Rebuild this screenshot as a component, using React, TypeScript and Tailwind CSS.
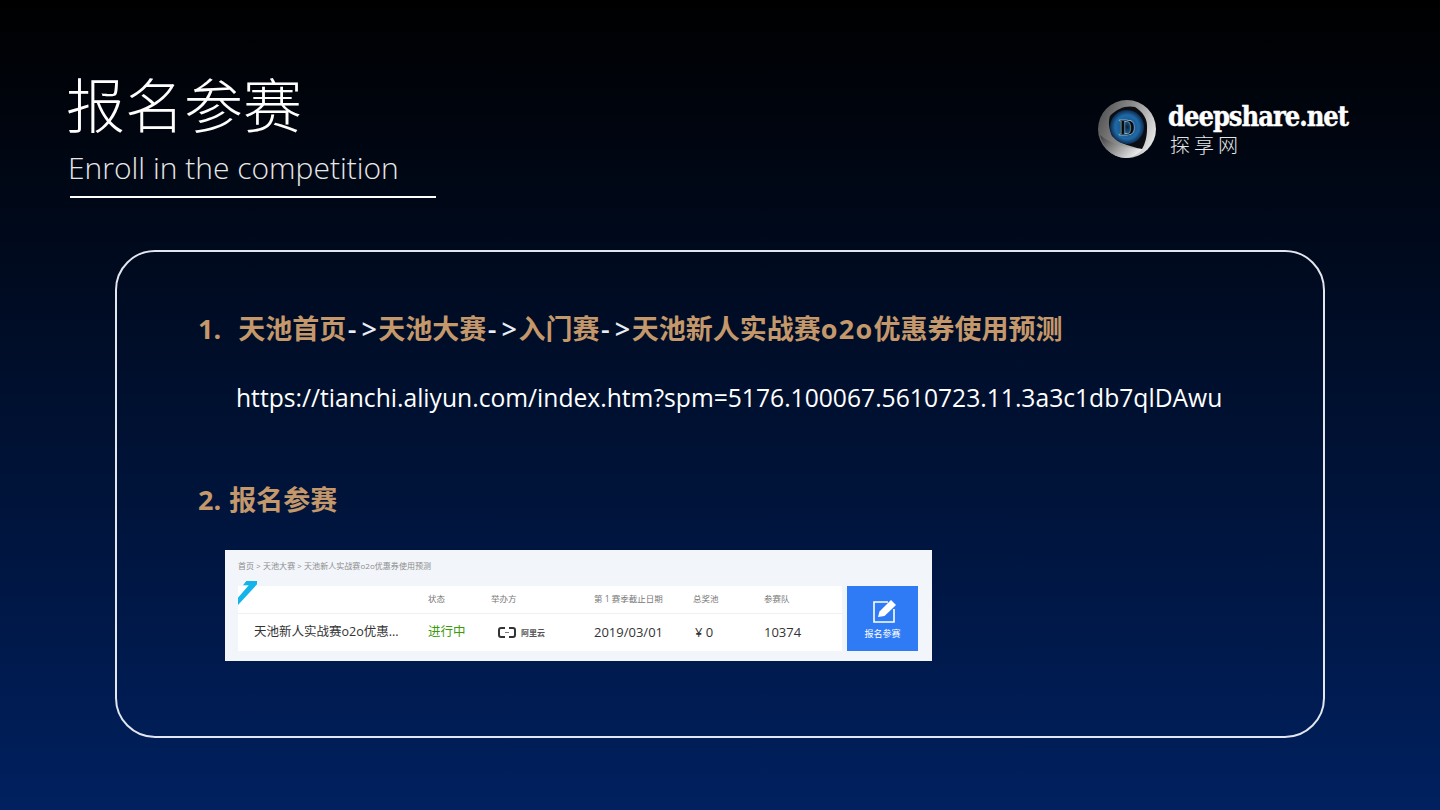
const cjk = "font-['Open_Sans','Noto_Sans_CJK_SC',sans-serif]";

const Logo = () => (
  <svg width="60" height="60" viewBox="0 0 60 60">
    <defs>
      <radialGradient id="eye" cx="50%" cy="50%" r="50%">
        <stop offset="0%" stopColor="#0e2238" />
        <stop offset="35%" stopColor="#175a92" />
        <stop offset="70%" stopColor="#2069a6" />
        <stop offset="100%" stopColor="#0d2c50" />
      </radialGradient>
      <linearGradient id="ring" x1="0" y1="0.2" x2="1" y2="0.6">
        <stop offset="0%" stopColor="#4f4f4f" />
        <stop offset="50%" stopColor="#8f8f8f" />
        <stop offset="100%" stopColor="#e6e6e6" />
      </linearGradient>
      <linearGradient id="wedge" x1="0" y1="0" x2="1" y2="0.5">
        <stop offset="0%" stopColor="#3a3a3a" />
        <stop offset="100%" stopColor="#e8e8e8" />
      </linearGradient>
    </defs>
    <circle cx="30" cy="30" r="29" fill="url(#ring)" />
    <path d="M13 17 C20 9 30 6 38 8 C46 13 51 20 50 30 C50 38 48 45 45 50 C34 48 22 44 15 37 C12 30 11 23 13 17z" fill="#0a0d14" />
    <circle cx="30" cy="28" r="17" fill="url(#eye)" />
    <path d="M3 36 C12 44 30 50 46 50 C40 56 34 59 28 59 C14 58 6 48 3 36z" fill="url(#wedge)" />
    <text x="30" y="36" textAnchor="middle" fontFamily="'Liberation Serif', serif" fontWeight="700" fontSize="23" fill="#05080f" stroke="#dbeaf6" strokeWidth="0.4">D</text>
  </svg>
);

const Pencil = () => (
  <svg className="ml-[5px]" width="24" height="24" viewBox="0 0 24 24" fill="none">
    <path d="M15 3H1v20h20V10" stroke="#fff" strokeWidth="1.6" />
    <path d="M5 18l1.5-5.5L18 1l5 5L11.5 17z" fill="#fff" />
  </svg>
);

const Arrow = () => (
  <span className="mx-[1.5px] font-semibold text-[#e8ecf4]">
    <span className="tracking-[5px]">-</span>&gt;
  </span>
);

const columns = "grid grid-cols-[190px_63px_103px_99px_71px_78px]";

export default function App() {
  return (
    <div className={`${cjk} h-[810px] w-[1440px] overflow-hidden bg-linear-to-b/srgb from-black to-[#00205f] text-white`}>
      <header className="flex justify-between pl-[68px] pr-[92px] pt-[68px]">
        <div className="w-[368px]">
          <h1 className="-ml-[2px] text-[59px] leading-[74px] font-light">报名参赛</h1>
          <p className="mt-[4px] text-[30px] leading-[44px] font-light text-[#e8e8e8]">Enroll in the competition</p>
          <div className="mt-[6px] ml-[2px] h-[2px] w-[366px] bg-white" />
        </div>
        <div className="mt-[31px] flex h-[60px] items-center gap-[11px]">
          <Logo />
          <div className="w-[180px] pt-[3px]">
            <div className="font-['DejaVu_Serif_Condensed','DejaVu_Serif',serif] text-[27px] leading-[30px] font-bold tracking-[-1px] whitespace-nowrap [-webkit-text-stroke:0.4px_white]">deepshare.net</div>
            <div className="mt-[1px] ml-[2px] text-[20px] leading-[26px] font-light tracking-[4px] text-[#e6e6e6]">探享网</div>
          </div>
        </div>
      </header>

      <section className="mx-[115px] mt-[52px] h-[488px] rounded-[40px] border-2 border-[#e2e6ee] pt-[57px] pl-[81px]">
        <h2 className="text-[27px] leading-[40px] font-bold whitespace-pre text-[#c4986a]">
          <span className="mr-[3px]">1.  </span>天池首页<Arrow />天池大赛<Arrow />入门赛<Arrow />天池新人实战赛<span className="tracking-[1.3px]">o2o</span>优惠券使用预测
        </h2>
        <p className="mt-[29px] pl-[38px] text-[24.65px] leading-[40px]">https://tianchi.aliyun.com/index.htm?spm=5176.100067.5610723.11.3a3c1db7qlDAwu</p>
        <h2 className="mt-[62px] text-[27px] leading-[40px] font-bold text-[#c4986a]">
          <span className="mr-[1px]">2.</span> 报名参赛
        </h2>

        <div className="mt-[30px] ml-[27px] h-[111px] w-[707px] bg-[#f2f5fa] pt-[10px] pl-[13px] text-[#333]">
          <div className="text-[8px] leading-[12px] tracking-[0.05px] text-[#8c8c8c]">首页 &gt; 天池大赛 &gt; 天池新人实战赛o2o优惠券使用预测</div>
          <div className="relative mt-[14px] flex gap-[5px]">
            <svg className="absolute top-[-5px] left-0" width="19" height="25" viewBox="0 0 19 25">
              <path d="M8.3 0H19v3.3L0 24V16.7L10.7 4.3H5z" fill="#12b4ea" />
            </svg>
            <div className="h-[65px] w-[604px] bg-white">
              <div className={`${columns} h-[28px] items-center border-b border-[#f0f0f0] text-[8.5px] text-[#777]`}>
                <span />
                <span>状态</span>
                <span>举办方</span>
                <span>第 1 赛季截止日期</span>
                <span>总奖池</span>
                <span>参赛队</span>
              </div>
              <div className={`${columns} h-[37px] items-center text-[13px]`}>
                <span className="pl-[16px] text-[12.5px] whitespace-nowrap">天池新人实战赛o2o优惠...</span>
                <span className="text-[12.5px] text-[#3c9a0c]">进行中</span>
                <span className="flex items-center gap-[5px] pl-[7px] text-[8px] font-bold text-[#555]">
                  <svg width="18" height="11" viewBox="0 0 18 11" fill="none">
                    <path d="M7 1H3Q1 1 1 3v5q0 2 2 2h4M11 1h4q2 0 2 2v5q0 2-2 2h-4" stroke="#333" strokeWidth="2" />
                    <path d="M7 5.5h4" stroke="#777" />
                  </svg>
                  阿里云
                </span>
                <span>2019/03/01</span>
                <span className="pl-[2px]">¥ 0</span>
                <span>10374</span>
              </div>
            </div>
            <button className="flex h-[65px] w-[71px] flex-col items-center bg-[#2f7bf5] pt-[13px] text-white">
              <Pencil />
              <span className="mt-[5px] text-[9px] leading-[12px]">报名参赛</span>
            </button>
          </div>
        </div>
      </section>
    </div>
  );
}
